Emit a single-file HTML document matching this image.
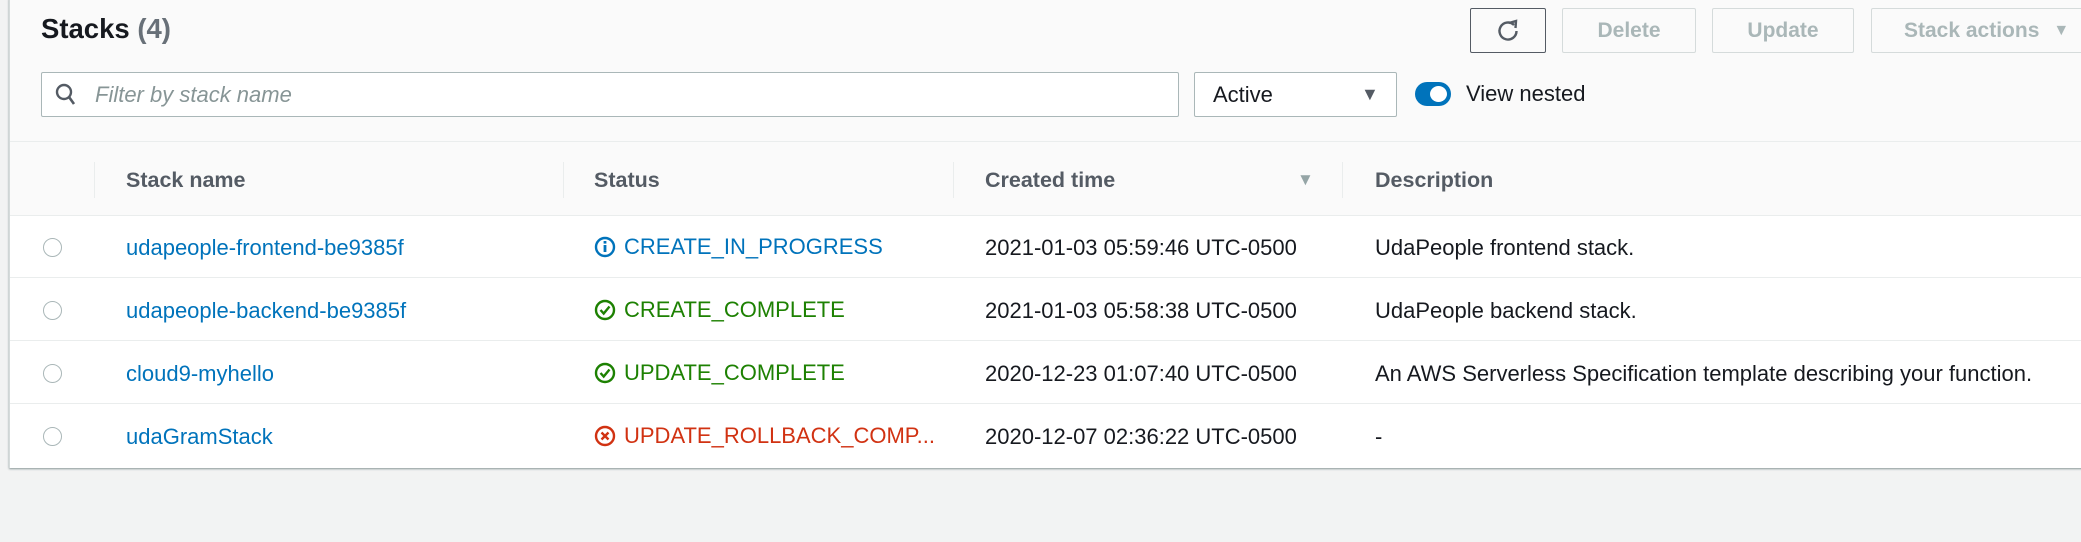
<!DOCTYPE html>
<html><head><meta charset="utf-8"><style>
*{box-sizing:border-box;margin:0;padding:0}
body{width:2081px;height:542px;background:#f2f3f3;font-family:"Liberation Sans",sans-serif;color:#16191f;position:relative;overflow:hidden}
.panel{position:absolute;left:9px;top:-2px;width:2080px;height:470px;background:#fff;border-left:1px solid #d5dbdb;box-shadow:0 1px 2px #879596}
.top{position:absolute;left:0;top:0;right:0;height:144px;background:#fafafa;border-bottom:1px solid #eaeded}
.abs{position:absolute}
.btn{position:absolute;top:10px;height:45px;border:1px solid #d5dbdb;border-radius:2px;background:#fafafa;color:#aab7b8;font-weight:bold;font-size:21px;display:flex;align-items:center;justify-content:center}
.hdr{position:absolute;top:144px;left:0;right:0;height:74px;background:#fafafa;border-bottom:1px solid #eaeded}
.hdr .t{position:absolute;top:26px;font-weight:bold;font-size:21.5px;color:#545b64}
.sep{position:absolute;top:20px;width:1px;height:36px;background:#eaeded}
.row{position:absolute;left:0;right:0;height:62px;border-bottom:1px solid #eaeded;font-size:22px}
.row>*{position:absolute;top:19px}
.radio{left:33px;top:22px!important;width:19px;height:19px;border:1.5px solid #aab7b8;border-radius:50%}
.name{left:116px;color:#0073bb}
.st{left:584px;display:flex;align-items:center}
.st svg{margin-right:8px}
.ct{left:975px}
.ds{left:1365px}
</style></head><body>
<div class="panel">
<div class="top">
<div class="abs" style="left:31px;top:15px;font-size:27.5px;font-weight:bold">Stacks <span style="color:#687078">(4)</span></div>
<div class="btn" style="left:1460px;width:76px;border-color:#545b64;color:#545b64">
<svg width="26" height="26" viewBox="0 0 26 26"><path d="M19 7 A8.5 8.5 0 1 0 21.5 13" fill="none" stroke="#545b64" stroke-width="2.4"/><path d="M14 5 L21 3 L20.5 10" fill="none" stroke="#545b64" stroke-width="2.4"/></svg></div>
<div class="btn" style="left:1552px;width:134px">Delete</div>
<div class="btn" style="left:1702px;width:142px">Update</div>
<div class="btn" style="left:1861px;width:230px;justify-content:flex-start;padding-left:32px">Stack actions <span style="margin-left:14px;font-size:16px">▼</span></div>
<div class="abs" style="left:31px;top:74px;width:1138px;height:45px;border:1px solid #aab7b8;border-radius:2px;background:#fff"></div>
<svg class="abs" style="left:45px;top:85px" width="22" height="24" viewBox="0 0 22 24"><circle cx="9" cy="9" r="7" fill="none" stroke="#545b64" stroke-width="2.4"/><path d="M14 14 L19 21" stroke="#545b64" stroke-width="2.6"/></svg>
<div class="abs" style="left:85px;top:84px;font-size:22px;font-style:italic;color:#879596">Filter by stack name</div>
<div class="abs" style="left:1184px;top:74px;width:203px;height:45px;border:1px solid #aab7b8;border-radius:2px;background:#fff"></div>
<div class="abs" style="left:1203px;top:84px;font-size:22px">Active</div>
<div class="abs" style="left:1351px;top:86px;font-size:18px;color:#545b64">▼</div>
<div class="abs" style="left:1405px;top:84px;width:36px;height:24px;border-radius:12px;background:#0073bb"></div>
<div class="abs" style="left:1420px;top:88px;width:17px;height:16px;border-radius:50%;background:#fff"></div>
<div class="abs" style="left:1456px;top:83px;font-size:22px">View nested</div>
</div>
<div class="hdr">
<div class="sep" style="left:84px"></div><div class="sep" style="left:553px"></div><div class="sep" style="left:943px"></div><div class="sep" style="left:1332px"></div>
<div class="t" style="left:116px">Stack name</div>
<div class="t" style="left:584px">Status</div>
<div class="t" style="left:975px">Created time</div>
<div class="abs" style="left:1287px;top:28px;font-size:17px;color:#95a5a6">▼</div>
<div class="t" style="left:1365px">Description</div>
</div>
<div class="row" style="top:218px">
<div class="radio"></div><div class="name">udapeople-frontend-be9385f</div>
<div class="st" style="color:#0073bb;top:18px"><svg width="22" height="22" viewBox="0 0 22 22"><circle cx="11" cy="11" r="9" fill="none" stroke="#0073bb" stroke-width="2.4"/><rect x="9.6" y="9" width="2.8" height="7" fill="#0073bb"/><rect x="9.6" y="5" width="2.8" height="2.6" fill="#0073bb"/></svg>CREATE_IN_PROGRESS</div>
<div class="ct">2021-01-03 05:59:46 UTC-0500</div><div class="ds">UdaPeople frontend stack.</div></div>
<div class="row" style="top:281px">
<div class="radio"></div><div class="name">udapeople-backend-be9385f</div>
<div class="st" style="color:#1d8102;top:18px"><svg width="22" height="22" viewBox="0 0 22 22"><circle cx="11" cy="11" r="9" fill="none" stroke="#1d8102" stroke-width="2.4"/><path d="M6.5 11 L9.7 14.5 L15.5 7.5" fill="none" stroke="#1d8102" stroke-width="2.4"/></svg>CREATE_COMPLETE</div>
<div class="ct">2021-01-03 05:58:38 UTC-0500</div><div class="ds">UdaPeople backend stack.</div></div>
<div class="row" style="top:344px">
<div class="radio"></div><div class="name">cloud9-myhello</div>
<div class="st" style="color:#1d8102;top:18px"><svg width="22" height="22" viewBox="0 0 22 22"><circle cx="11" cy="11" r="9" fill="none" stroke="#1d8102" stroke-width="2.4"/><path d="M6.5 11 L9.7 14.5 L15.5 7.5" fill="none" stroke="#1d8102" stroke-width="2.4"/></svg>UPDATE_COMPLETE</div>
<div class="ct">2020-12-23 01:07:40 UTC-0500</div><div class="ds">An AWS Serverless Specification template describing your function.</div></div>
<div class="row" style="top:407px;border-bottom:none">
<div class="radio"></div><div class="name">udaGramStack</div>
<div class="st" style="color:#d13212;top:18px"><svg width="22" height="22" viewBox="0 0 22 22"><circle cx="11" cy="11" r="9" fill="none" stroke="#d13212" stroke-width="2.4"/><path d="M7.5 7.5 L14.5 14.5 M14.5 7.5 L7.5 14.5" stroke="#d13212" stroke-width="2.4"/></svg>UPDATE_ROLLBACK_COMP...</div>
<div class="ct">2020-12-07 02:36:22 UTC-0500</div><div class="ds">-</div></div>
</div>
</body></html>
